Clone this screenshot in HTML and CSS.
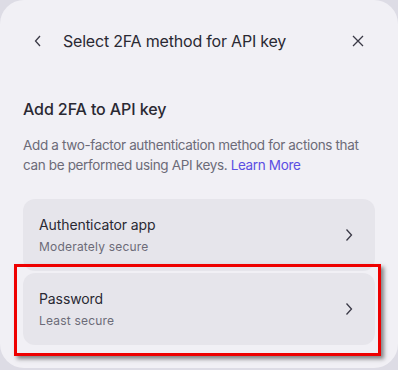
FILE: index.html
```html
<!DOCTYPE html>
<html>
<head>
<meta charset="utf-8">
<link rel="stylesheet" href="styles.css">
</head>
<body>
<div class="panel">
  <div class="header">
    <span class="icon-btn back">
      <svg width="8" height="12" viewBox="0 0 8 12"><path d="M6 1 L1.5 6 L6 11" fill="none" stroke="#3a3946" stroke-width="1.3"/></svg>
    </span>
    <span class="header-title">Select 2FA method for API key</span>
    <span class="icon-btn close">
      <svg width="12" height="12" viewBox="0 0 12 12"><path d="M1 1 L11 11 M11 1 L1 11" fill="none" stroke="#3a3946" stroke-width="1.3"/></svg>
    </span>
  </div>
  <h2 class="heading">Add 2FA to API key</h2>
  <p class="desc">Add a two-factor authentication method for actions that can be performed using API keys. <a class="link">Learn More</a></p>
  <div class="options">
    <div class="option">
      <div class="option-text">
        <div class="option-title">Authenticator app</div>
        <div class="option-sub">Moderately secure</div>
      </div>
      <svg class="chev" width="8" height="14" viewBox="0 0 8 14"><path d="M1.5 1.5 L6.5 7 L1.5 12.5" fill="none" stroke="#3a3946" stroke-width="1.3"/></svg>
    </div>
    <div class="option">
      <div class="option-text">
        <div class="option-title">Password</div>
        <div class="option-sub">Least secure</div>
      </div>
      <svg class="chev" width="8" height="14" viewBox="0 0 8 14"><path d="M1.5 1.5 L6.5 7 L1.5 12.5" fill="none" stroke="#3a3946" stroke-width="1.3"/></svg>
    </div>
  </div>
  <div class="highlight"></div>
</div>
</body>
</html>
```

FILE: styles.css
```css
html, body {
  margin: 0;
  padding: 0;
  background: #dddce5;
}
body {
  font-family: Inter, "Noto Sans", sans-serif;
  width: 398px;
  height: 370px;
  overflow: hidden;
}
.panel {
  position: relative;
  box-sizing: border-box;
  width: 398px;
  height: 368px;
  background: #f1f0f5;
  border-radius: 24px;
  padding: 20px 23px 0;
}
.header {
  display: flex;
  align-items: center;
  height: 42px;
}
.icon-btn {
  display: flex;
  align-items: center;
  justify-content: center;
}
.back {
  width: 8px;
  margin-left: 11px;
  margin-right: 21px;
}
.header-title {
  flex: 1;
  font-size: 16px;
  color: #2a2933;
  letter-spacing: -0.2px;
}
.close {
  width: 12px;
  margin-right: 11px;
}
.heading {
  margin: 36px 0 0;
  font-size: 16px;
  font-weight: 500;
  line-height: 22px;
  color: #2a2933;
  letter-spacing: -0.1px;
}
.desc {
  margin: 15px -4px 0 0;
  font-size: 13.5px;
  line-height: 20px;
  color: #6c6b78;
  letter-spacing: -0.35px;
}
.link {
  color: #5b4ee3;
}
.options {
  margin-top: 24px;
  display: flex;
  flex-direction: column;
  gap: 2px;
}
.option {
  display: flex;
  align-items: center;
  height: 72px;
  box-sizing: border-box;
  padding: 0 22px 0 16px;
  background: #e6e5eb;
  border-radius: 12px;
}
.option-text {
  flex: 1;
}
.option-title {
  font-size: 14px;
  line-height: 20px;
  color: #2a2933;
  letter-spacing: -0.1px;
}
.option-sub {
  margin-top: 4px;
  font-size: 12px;
  line-height: 16px;
  color: #6c6b78;
  letter-spacing: 0.2px;
}
.highlight {
  position: absolute;
  left: 14px;
  top: 264px;
  width: 361px;
  height: 86px;
  border: 3px solid #ee0000;
  box-shadow: 3px 3px 4px rgba(60, 60, 60, 0.6);
}
```
